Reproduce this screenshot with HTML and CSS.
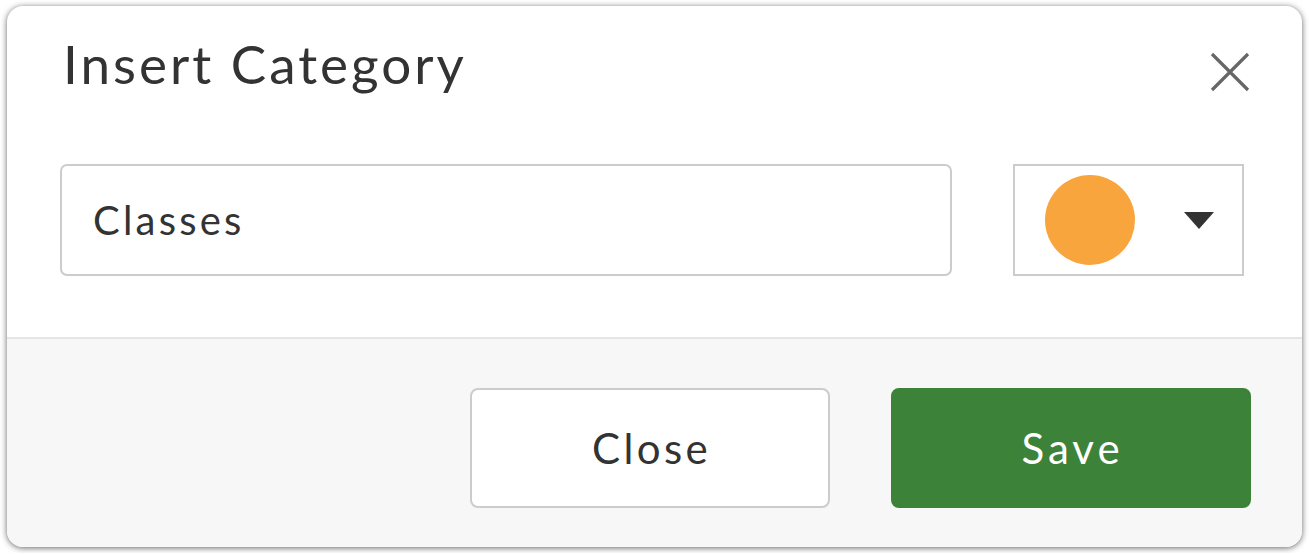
FILE: index.html
```html
<!DOCTYPE html>
<html lang="en">
<head>
  <meta charset="UTF-8">
  <meta name="viewport" content="width=device-width, initial-scale=1.0">
  <title>Insert Category</title>
  <link rel="stylesheet" href="styles.css">
</head>
<body>
  <div class="modal">
    <div class="modal-header">
      <h1 class="modal-title">Insert Category</h1>
      <button class="btn-x" type="button" aria-label="Close">
        <svg width="40" height="40" viewBox="0 0 40 40"><path d="M2 2 L38 38 M38 2 L2 38" stroke="#666" stroke-width="3.2" fill="none"/></svg>
      </button>
    </div>
    <div class="modal-body">
      <input class="field" type="text" value="Classes">
      <div class="color-pick">
        <span class="swatch"></span>
        <span class="caret"></span>
      </div>
    </div>
    <div class="modal-footer">
      <button class="btn btn-default" type="button">Close</button>
      <button class="btn btn-save" type="button">Save</button>
    </div>
  </div><!--//modal-->
</body>
</html>
```
FILE: styles.css
```css
* {margin:0; padding:0; box-sizing:border-box;}
body {background:#fff; font-family:Lato, "Liberation Sans", sans-serif; color:#333;}

.modal {display:flex; flex-direction:column; width:1295px; height:541px; margin:6px 7px; background:#fff; border-radius:16px; overflow:hidden; box-shadow:0 1px 6px rgba(0,0,0,.6);}

.modal-header {display:flex; justify-content:space-between; align-items:flex-start; padding:26px 52px 0 56px; height:158px;}
.modal-title {font-size:53px; font-weight:400; line-height:64px; color:#333; letter-spacing:3px;}
.btn-x {background:none; border:0 none; margin-top:20px; width:40px; height:40px;}
.btn-x svg {display:block;}

.modal-body {display:flex; gap:61px; padding:0 58px 61px 53px; border-bottom:2px solid #e5e5e5;}
.field {width:892px; height:112px; padding:0 31px; border:2px solid #ccc; border-radius:7px; font-family:inherit; font-size:40px; letter-spacing:3.2px; color:#333; outline:none;}
.color-pick {display:flex; align-items:center; justify-content:space-between; width:231px; height:112px; padding:0 28px 0 30px; border:2px solid #ccc; background:#fff;}
.swatch {width:90px; height:90px; border-radius:50%; background:#f9a53e;}
.caret {width:0; height:0; border-left:15px solid transparent; border-right:15px solid transparent; border-top:17px solid #333;}

.modal-footer {flex:1; display:flex; justify-content:flex-end; gap:61px; padding:49px 51px 0 0; background:#f7f7f7;}
.btn {width:360px; height:120px; padding-left:3px; border-radius:8px; font-family:inherit; font-size:42px; letter-spacing:3.4px; cursor:pointer;}
.btn-default {background:#fff; border:2px solid #ccc; color:#333;}
.btn-save {background:#3d8239; border:2px solid #3d8239; color:#fff; letter-spacing:4px;}
```
